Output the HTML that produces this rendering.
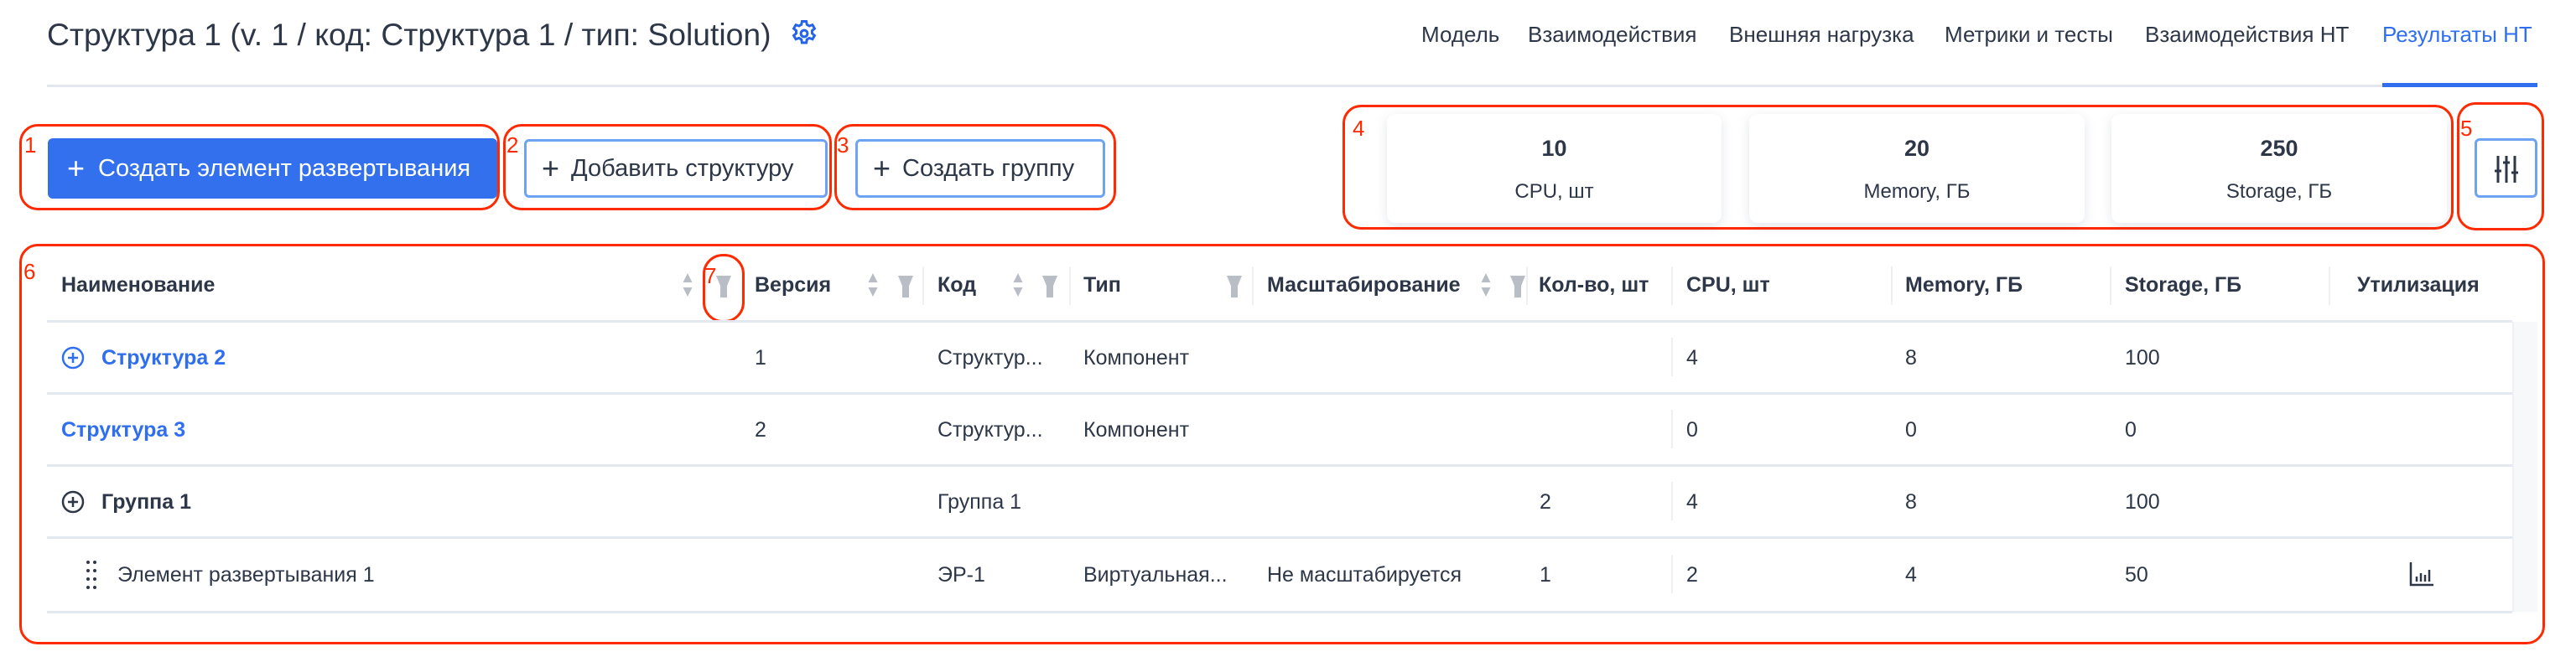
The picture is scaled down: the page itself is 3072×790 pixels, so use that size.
<!DOCTYPE html>
<html><head><meta charset="utf-8"><style>
*{margin:0;padding:0;box-sizing:border-box}
body{width:3072px;height:790px;background:#fff;font-family:"Liberation Sans","Noto Sans CJK SC",sans-serif;color:#2d3748;position:relative;overflow:hidden}
.a{position:absolute;white-space:nowrap}
.red{position:absolute;border:3px solid #ff2a00;border-radius:22px}
.rl{position:absolute;color:#ff2a00;font-size:26px;line-height:26px}
.btn{position:absolute;border:3px solid #6ea3f3;border-radius:6px;display:flex;align-items:center;font-size:29px;color:#2d3748}
.card{position:absolute;background:#fff;border-radius:10px;box-shadow:0 4px 14px rgba(40,60,100,.13);text-align:center}
.card b{display:block;font-size:27px;margin-top:26px}
.card span{display:block;font-size:24px;margin-top:22px}
.th{position:absolute;top:326px;font-size:25px;font-weight:bold;line-height:28px}
.td{position:absolute;font-size:25px;line-height:28px}
.hl{position:absolute;left:56px;width:2940px;height:3px;background:#e4e8f0}
.vs{position:absolute;width:2px;background:#eef0f4}
.srt{position:absolute;width:14px;height:32px}
.flt{position:absolute;width:20px;height:32px}
</style></head><body>
<div class="a" style="left:56px;top:19px;font-size:37.3px;line-height:44px;color:#2d3748">Структура 1 (v. 1 / код: Структура 1 / тип: Solution)</div>
<svg class="a" style="left:941px;top:22px" width="36" height="36" viewBox="0 0 24 24" fill="none" stroke="#2563eb" stroke-width="2"><path d="M10.3 2.3h3.4l.5 2.6 1.9 1.1 2.5-.9 1.7 2.9-2 1.7v2.2l2 1.7-1.7 2.9-2.5-.9-1.9 1.1-.5 2.6h-3.4l-.5-2.6-1.9-1.1-2.5.9-1.7-2.9 2-1.7v-2.2l-2-1.7 1.7-2.9 2.5.9 1.9-1.1z"/><circle cx="12" cy="12" r="2.6"/></svg>
<div class="a" style="top:26px;font-size:26px;line-height:30px;left:1695px">Модель</div>
<div class="a" style="top:26px;font-size:26px;line-height:30px;left:1822px">Взаимодействия</div>
<div class="a" style="top:26px;font-size:26px;line-height:30px;left:2062px">Внешняя нагрузка</div>
<div class="a" style="top:26px;font-size:26px;line-height:30px;left:2319px">Метрики и тесты</div>
<div class="a" style="top:26px;font-size:26px;line-height:30px;left:2558px">Взаимодействия НТ</div>
<div class="a" style="top:26px;font-size:26px;line-height:30px;left:2841px;color:#2f6fef">Результаты НТ</div>
<div class="a" style="left:56px;top:101px;width:2970px;height:3px;background:#e3e6ef"></div>
<div class="a" style="left:2841px;top:99px;width:185px;height:5px;background:#2f6fef"></div>

<div class="red" style="left:23px;top:148px;width:573px;height:103px"></div><div class="rl" style="left:29px;top:160px">1</div>
<div class="red" style="left:600px;top:148px;width:392px;height:103px"></div><div class="rl" style="left:604px;top:160px">2</div>
<div class="red" style="left:995px;top:148px;width:336px;height:103px"></div><div class="rl" style="left:998px;top:160px">3</div>
<div class="btn" style="left:57px;top:165px;width:536px;height:72px;background:#3370ee;border-color:#3370ee;color:#fff"><span style="font-size:36px;margin:0 16px 0 20px;font-weight:300">+</span>Создать элемент развертывания</div>
<div class="btn" style="left:625px;top:166px;width:362px;height:70px"><span style="font-size:36px;margin:0 14px 0 18px;font-weight:300">+</span>Добавить структуру</div>
<div class="btn" style="left:1020px;top:166px;width:298px;height:70px"><span style="font-size:36px;margin:0 14px 0 18px;font-weight:300">+</span>Создать группу</div>

<div class="red" style="left:1601px;top:125px;width:1325px;height:149px"></div><div class="rl" style="left:1613px;top:140px">4</div>
<div class="red" style="left:2930px;top:122px;width:104px;height:153px"></div><div class="rl" style="left:2934px;top:140px">5</div>
<div class="card" style="left:1654px;top:136px;width:399px;height:130px"><b>10</b><span>CPU, шт</span></div>
<div class="card" style="left:2086px;top:136px;width:400px;height:130px"><b>20</b><span>Memory, ГБ</span></div>
<div class="card" style="left:2518px;top:136px;width:400px;height:130px"><b>250</b><span>Storage, ГБ</span></div>
<div class="btn" style="left:2951px;top:165px;width:75px;height:71px;justify-content:center"><svg width="30" height="34" viewBox="0 0 30 34" stroke="#2d3748" stroke-width="3"><path d="M5 2v32M1 20h8M15 2v32M11 10h8M25 2v32M21 22h8"/></svg></div>

<div class="red" style="left:23px;top:291px;width:3012px;height:478px"></div><div class="rl" style="left:28px;top:311px">6</div>
<div class="red" style="left:838px;top:303px;width:50px;height:82px;border-radius:24px"></div><div class="rl" style="left:840px;top:316px">7</div>

<div class="th" style="left:73px">Наименование</div>
<div class="th" style="left:900px">Версия</div>
<div class="th" style="left:1118px">Код</div>
<div class="th" style="left:1292px">Тип</div>
<div class="th" style="left:1511px">Масштабирование</div>
<div class="th" style="left:1835px">Кол-во, шт</div>
<div class="th" style="left:2011px">CPU, шт</div>
<div class="th" style="left:2272px">Memory, ГБ</div>
<div class="th" style="left:2534px">Storage, ГБ</div>
<div class="th" style="left:2811px">Утилизация</div>
<svg width="0" height="0" style="position:absolute"><defs>
<symbol id="s" viewBox="0 0 14 32"><path d="M7 2 12.5 13H1.5zM7 30 12.5 19H1.5z" fill="#b8bdc6"/></symbol>
<symbol id="f" viewBox="0 0 20 32"><path d="M1 3h18l-5 12v14H6V15z" fill="#b8bdc6"/></symbol></defs></svg>
<svg class="srt" style="left:813px;top:324px"><use href="#s"/></svg>
<svg class="flt" style="left:853px;top:326px"><use href="#f"/></svg>
<svg class="srt" style="left:1034px;top:324px"><use href="#s"/></svg>
<svg class="flt" style="left:1070px;top:326px"><use href="#f"/></svg>
<svg class="srt" style="left:1207px;top:324px"><use href="#s"/></svg>
<svg class="flt" style="left:1242px;top:326px"><use href="#f"/></svg>
<svg class="flt" style="left:1462px;top:326px"><use href="#f"/></svg>
<svg class="srt" style="left:1765px;top:324px"><use href="#s"/></svg>
<svg class="flt" style="left:1800px;top:326px"><use href="#f"/></svg>
<div class="vs" style="left:1100px;top:318px;height:46px"></div>
<div class="vs" style="left:1275px;top:318px;height:46px"></div>
<div class="vs" style="left:1493px;top:318px;height:46px"></div>
<div class="vs" style="left:1820px;top:318px;height:46px"></div>
<div class="vs" style="left:1993px;top:318px;height:46px"></div>
<div class="vs" style="left:2255px;top:318px;height:46px"></div>
<div class="vs" style="left:2516px;top:318px;height:46px"></div>
<div class="vs" style="left:2777px;top:318px;height:46px"></div>

<div class="hl" style="top:382px"></div>
<div class="hl" style="top:468px"></div>
<div class="hl" style="top:554px"></div>
<div class="hl" style="top:640px"></div>
<div class="hl" style="top:729px"></div>
<div class="a" style="left:2996px;top:384px;width:30px;height:346px;background:#f7f8fa;border-left:2px solid #eef0f4"></div>
<div class="vs" style="left:1993px;top:403px;height:46px"></div>
<div class="vs" style="left:1993px;top:489px;height:46px"></div>
<div class="vs" style="left:1993px;top:575px;height:46px"></div>
<div class="vs" style="left:1993px;top:662px;height:46px"></div>

<svg class="a" style="left:73px;top:413px" width="28" height="28" viewBox="0 0 28 28" fill="none" stroke="#2f6fef" stroke-width="2.5"><circle cx="14" cy="14" r="12"/><path d="M14 8v12M8 14h12"/></svg>
<div class="td" style="left:121px;top:413px;font-weight:bold;color:#2f6fef">Структура 2</div>
<div class="td" style="left:900px;top:413px">1</div>
<div class="td" style="left:1118px;top:413px">Структур...</div>
<div class="td" style="left:1292px;top:413px">Компонент</div>
<div class="td" style="left:2011px;top:413px">4</div>
<div class="td" style="left:2272px;top:413px">8</div>
<div class="td" style="left:2534px;top:413px">100</div>

<div class="td" style="left:73px;top:499px;font-weight:bold;color:#2f6fef">Структура 3</div>
<div class="td" style="left:900px;top:499px">2</div>
<div class="td" style="left:1118px;top:499px">Структур...</div>
<div class="td" style="left:1292px;top:499px">Компонент</div>
<div class="td" style="left:2011px;top:499px">0</div>
<div class="td" style="left:2272px;top:499px">0</div>
<div class="td" style="left:2534px;top:499px">0</div>

<svg class="a" style="left:73px;top:585px" width="28" height="28" viewBox="0 0 28 28" fill="none" stroke="#2d3748" stroke-width="2.5"><circle cx="14" cy="14" r="12"/><path d="M14 8v12M8 14h12"/></svg>
<div class="td" style="left:121px;top:585px;font-weight:bold">Группа 1</div>
<div class="td" style="left:1118px;top:585px">Группа 1</div>
<div class="td" style="left:1836px;top:585px">2</div>
<div class="td" style="left:2011px;top:585px">4</div>
<div class="td" style="left:2272px;top:585px">8</div>
<div class="td" style="left:2534px;top:585px">100</div>

<svg class="a" style="left:102px;top:668px" width="14" height="36" viewBox="0 0 14 36" fill="#2d3748"><circle cx="3" cy="3" r="2"/><circle cx="11" cy="3" r="2"/><circle cx="3" cy="13" r="2"/><circle cx="11" cy="13" r="2"/><circle cx="3" cy="23" r="2"/><circle cx="11" cy="23" r="2"/><circle cx="3" cy="33" r="2"/><circle cx="11" cy="33" r="2"/></svg>
<div class="td" style="left:140px;top:672px">Элемент развертывания 1</div>
<div class="td" style="left:1118px;top:672px">ЭР-1</div>
<div class="td" style="left:1292px;top:672px">Виртуальная...</div>
<div class="td" style="left:1511px;top:672px">Не масштабируется</div>
<div class="td" style="left:1836px;top:672px">1</div>
<div class="td" style="left:2011px;top:672px">2</div>
<div class="td" style="left:2272px;top:672px">4</div>
<div class="td" style="left:2534px;top:672px">50</div>
<svg class="a" style="left:2873px;top:670px" width="30" height="30" viewBox="0 0 30 30" fill="none" stroke="#2d3748" stroke-width="2.5"><path d="M2 1v27h27M9 24v-6M14 24v-10M19 24v-8M24 24v-14"/></svg>
</body></html>
